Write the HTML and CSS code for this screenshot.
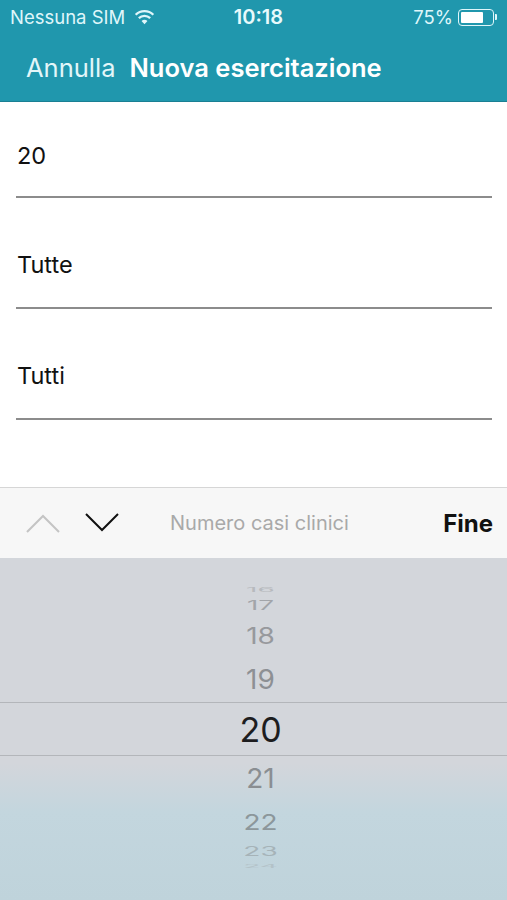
FILE: index.html
```html
<!DOCTYPE html>
<html lang="it">
<head>
    <meta charset="UTF-8">
    <meta name="viewport" content="width=device-width, initial-scale=1.0">
    <title>Nuova esercitazione</title>
    <link rel="stylesheet" href="styles.css">
</head>
<body>
    <header class="top">
        <div class="status">
            <div class="status-left">
                <span>Nessuna SIM</span>
                <svg class="wifi" width="21" height="16" viewBox="0 0 20 15">
                    <path d="M10 14.5 L7.2 11.3 A4.2 4.2 0 0 1 12.8 11.3 Z" fill="#dff6fa"/>
                    <path d="M4.6 8.6 A7.8 7.8 0 0 1 15.4 8.6" stroke="#dff6fa" stroke-width="2.2" fill="none"/>
                    <path d="M1.6 5.4 A12 12 0 0 1 18.4 5.4" stroke="#dff6fa" stroke-width="2.2" fill="none"/>
                </svg>
            </div>
            <div class="status-time">10:18</div>
            <div class="status-right">
                <span>75%</span>
                <span class="battery"><span class="battery-level"></span></span>
                <span class="battery-tip"></span>
            </div>
        </div>
        <nav class="navbar">
            <span class="nav-cancel">Annulla</span>
            <span class="nav-title">Nuova esercitazione</span>
        </nav>
    </header>

    <main class="fields">
        <div class="field">20</div>
        <div class="field">Tutte</div>
        <div class="field">Tutti</div>
    </main>

    <div class="toolbar">
        <div class="arrows">
            <svg class="chev" width="34" height="20" viewBox="0 0 34 20">
                <polyline points="1,19 17,3 33,19" stroke="#c4c4c4" stroke-width="2" fill="none"/>
            </svg>
            <svg class="chev" width="34" height="20" viewBox="0 0 34 20">
                <polyline points="1,1 17,17 33,1" stroke="#111" stroke-width="2" fill="none"/>
            </svg>
        </div>
        <div class="toolbar-label">Numero casi clinici</div>
        <div class="toolbar-done">Fine</div>
    </div>

    <section class="picker">
        <div class="row far2"><span>16</span></div>
        <div class="row far1"><span>17</span></div>
        <div class="row near2"><span>18</span></div>
        <div class="row near1"><span>19</span></div>
        <div class="row selected"><span>20</span></div>
        <div class="row below1"><span>21</span></div>
        <div class="row below2"><span>22</span></div>
        <div class="row below3"><span>23</span></div>
        <div class="row below4"><span>24</span></div>
    </section>
</body>
</html>
```

FILE: styles.css
```css
/* Basic Reset */
* {
    margin: 0;
    padding: 0;
    box-sizing: border-box;
}
body {
    font-family: Inter, "Liberation Sans", sans-serif;
    background-color: #fff;
    color: #111;
    width: 507px;
    height: 900px;
    overflow: hidden;
    display: flex;
    flex-direction: column;
}

/* Header */
.top {
    background-color: #2097ad;
    border-bottom: 1px solid #1a7f93;
    height: 102px;
}
.status {
    height: 34px;
    display: flex;
    align-items: center;
    justify-content: space-between;
    padding: 0 10px 0 10px;
    color: #dff6fa;
    font-size: 18.5px;
}
.status-left, .status-right {
    display: flex;
    align-items: center;
    width: 170px;
}
.status-left span {
    margin-right: 9px;
}
.status-right {
    justify-content: flex-end;
}
.status-time {
    font-weight: 600;
    font-size: 20px;
    color: #e8fafc;
    margin-left: 10px;
}
.battery {
    margin-left: 5px;
    width: 36px;
    height: 17px;
    border: 1.5px solid #dff6fa;
    border-radius: 4px;
    padding: 2px;
    display: flex;
}
.battery-level {
    width: 75%;
    background: #fff;
    border-radius: 1px;
}
.battery-tip {
    width: 2px;
    height: 6px;
    margin-left: 1px;
    background: #dff6fa;
    border-radius: 0 1px 1px 0;
}
.navbar {
    height: 67px;
    display: flex;
    align-items: center;
    padding: 0 0 0 26px;
    color: #fff;
    font-size: 25.5px;
}
.nav-cancel {
    color: #e3f6f9;
    margin-right: 14px;
}
.nav-title {
    font-weight: 600;
}

/* Form fields */
.fields {
    flex: 1;
    padding: 0 15px 0 16px;
    border-bottom: 1px solid #d6d6d6;
}
.field {
    height: 111px;
    display: flex;
    align-items: center;
    padding: 24px 0 0 1px;
    font-size: 23.5px;
    border-bottom: 2px solid #8c8c8c;
}
.field:first-child {
    height: 96px;
    padding-top: 12px;
}

/* Keyboard toolbar */
.toolbar {
    height: 70px;
    background-color: #f7f7f7;
    display: flex;
    align-items: center;
    padding: 0 14px 0 26px;
}
.arrows {
    display: flex;
    gap: 25px;
    width: 144px;
}
.toolbar-label {
    flex: 1;
    font-size: 20px;
    color: #a9a9a9;
}
.toolbar-done {
    font-weight: 700;
    font-size: 24px;
}

/* Picker wheel */
.picker {
    height: 342px;
    padding: 24px 0 0 14px;
    background: linear-gradient(#d3d6db 0, #d3d6db 205px, #c3d6de 255px, #bfd3db 100%);
    display: flex;
    flex-direction: column;
    align-items: center;
    overflow: hidden;
}
.row {
    width: 100%;
    display: flex;
    align-items: center;
    justify-content: center;
    font-size: 28px;
    color: #8d9094;
}
.far2 { height: 16px; color: #b7babe; }
.far2 span { transform: scaleY(0.2); }
.far1 { height: 16px; color: #a2a5a9; }
.far1 span { transform: scaleY(0.45); }
.near2 { height: 44px; color: #97999d; }
.near2 span { transform: scaleY(0.8); }
.near1 { height: 44px; }
.near1 span { transform: scaleY(0.95); }
.selected {
    height: 54px;
    font-size: 34px;
    color: #1d1d1f;
    border-top: 1px solid #b3b6ba;
    border-bottom: 1px solid #b3b6ba;
    margin-left: -14px;
    padding-left: 14px;
    width: calc(100% + 14px);
}
.below1 { height: 46px; color: #8a8e92; }
.below1 span { transform: scaleY(0.95); }
.below2 { height: 40px; color: #8c979b; }
.below2 span { transform: scaleY(0.75); }
.below3 { height: 20px; color: #a6b3b8; }
.below3 span { transform: scaleY(0.45); }
.below4 { height: 8px; color: #b3c2c8; }
.below4 span { transform: scaleY(0.15); }
```
